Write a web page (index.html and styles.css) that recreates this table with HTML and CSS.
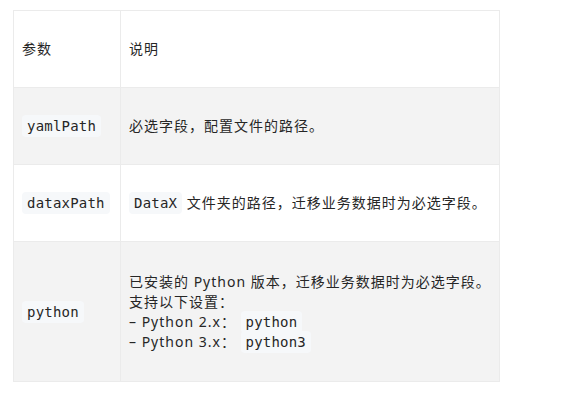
FILE: index.html
```html
<!DOCTYPE html>
<html lang="zh-CN">
<head>
  <meta charset="UTF-8">
  <title>参数说明</title>
  <link rel="stylesheet" href="styles.css">
</head>
<body>
  <table class="params">
    <thead>
      <tr>
        <th>参数</th>
        <th>说明</th>
      </tr>
    </thead>
    <tbody>
      <tr>
        <td><code>yamlPath</code></td>
        <td>必选字段，配置文件的路径。</td>
      </tr>
      <tr>
        <td><code>dataxPath</code></td>
        <td><code>DataX</code> 文件夹的路径，迁移业务数据时为必选字段。</td>
      </tr>
      <tr class="tall">
        <td><code>python</code></td>
        <td>已安装的 Python 版本，迁移业务数据时为必选字段。<br>支持以下设置：<br>– Python 2.x： <code>python</code><br>– Python 3.x： <code>python3</code></td>
      </tr>
    </tbody>
  </table>
</body>
</html>
```

FILE: styles.css
```css
body {
  margin: 0;
  padding: 10px 13px;
  background: #ffffff;
  color: #262626;
  font-family: "Noto Sans", "Noto Sans CJK SC", sans-serif;
  font-size: 14px;
  line-height: 20px;
  letter-spacing: 1px;
}
.params {
  width: 487px;
  border-collapse: collapse;
}
.params th,
.params td {
  border: 1px solid #ebebeb;
  padding: 28px 8px;
  text-align: left;
  vertical-align: middle;
  font-weight: normal;
}
.params th:first-child,
.params td:first-child {
  width: 90px;
}
.params tbody tr:nth-child(odd) {
  background-color: #f3f3f3;
}
.params tr.tall td {
  padding-top: 30px;
  padding-bottom: 29px;
}
code {
  font-family: "DejaVu Sans Mono", monospace;
  font-size: 14px;
  background-color: #f6f8fa;
  padding: 3px 5px;
  border-radius: 4px;
  letter-spacing: 0.2px;
}
```
